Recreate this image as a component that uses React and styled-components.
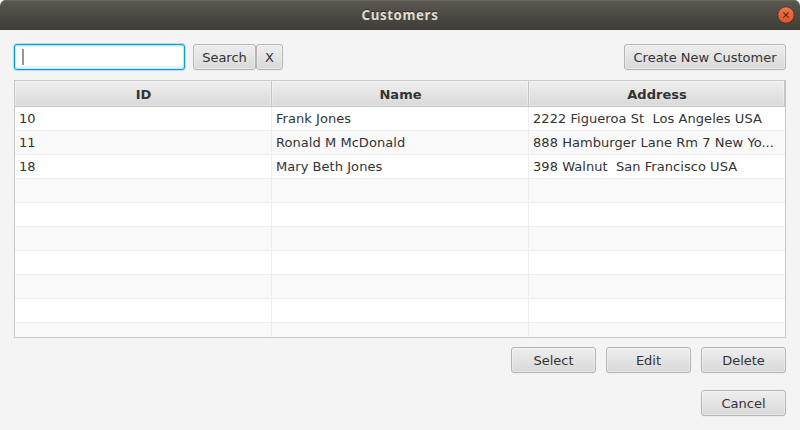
import React from "react";
import styled, { createGlobalStyle } from "styled-components";

const GlobalStyle = createGlobalStyle`
  * { box-sizing: border-box; }
  body { margin: 0; background: #fff; }
`;

const Window = styled.div`
  width: 800px;
  height: 430px;
  background: #f4f4f4;
  border-radius: 6px 6px 0 0;
  overflow: hidden;
  font: 13px/16px "DejaVu Sans", sans-serif;
  color: #333;
`;

const TitleBar = styled.header`
  height: 30px;
  display: grid;
  grid-template-columns: 1fr auto 1fr;
  align-items: center;
  padding: 0 5px;
  background: linear-gradient(#5b5850, #3e3d38);
  box-shadow: inset 0 1px #69665d;
`;

const Title = styled.h1`
  grid-column: 2;
  margin: 0;
  font: 700 13.3px/20px "Noto Sans", sans-serif;
  letter-spacing: 0.6px;
  color: #dfdbd2;
  text-shadow: 0 -1px #2d2c28;
`;

const CloseButton = styled.button`
  justify-self: end;
  width: 18px;
  height: 18px;
  padding: 0;
  border: 0;
  background: none;
  svg { display: block; }
`;

const Content = styled.main`
  padding: 14px 14px 0;
`;

const Toolbar = styled.div`
  display: flex;
  height: 26px;
  margin-bottom: 10px;
`;

const SearchField = styled.div`
  width: 171px;
  height: 26px;
  margin-right: 8px;
  padding: 4px 0 0 8px;
  border: 1px solid #039ed3;
  border-radius: 3px;
  background: #fff;
  box-shadow: 0 0 0 1px #b5dfec, inset 0 0 0 1px #c5e6f1, inset 0 2px #e1eff5, inset 0 -3px #eaf4f8;
`;

const Caret = styled.div`
  width: 2px;
  height: 16px;
  margin-left: -1px;
  background: #969696;
`;

const Button = styled.button`
  width: ${({ $width }) => $width}px;
  height: 26px;
  padding: 1px 0 0;
  border: 1px solid #b5b5b5;
  border-radius: 3px;
  background: linear-gradient(#eeeeee, #d9d9d9);
  box-shadow: inset 0 0 0 1px rgba(255, 255, 255, 0.35), 0 1px #ececec;
  font: inherit;
  color: #333;
  white-space: nowrap;
`;

const Spacer = styled.div`
  flex: 1;
`;

const Table = styled.div`
  height: 258px;
  border: 1px solid #c8c8c8;
  background: #fff;
  overflow: hidden;
`;

const Row = styled.div`
  display: grid;
  grid-template-columns: 257px 257px 256px;
  height: 24px;
  background: ${({ $striped }) => ($striped ? "#f9f9f9" : "#fff")};
`;

const HeaderRow = styled(Row)`
  height: 26px;
`;

const HeaderCell = styled.div`
  padding: 6px 0 0 1px;
  border-right: 1px solid #c4c4c4;
  border-bottom: 1px solid #c4c4c4;
  background: linear-gradient(#efefef, #d9d9d9);
  box-shadow: inset 0 0 0 1px rgba(255, 255, 255, 0.35);
  text-align: center;
  font-weight: 700;
`;

const Cell = styled.div`
  padding: 4px 4px 0;
  border-right: 1px solid #ededed;
  border-bottom: 1px solid #ededed;
  letter-spacing: 0.05px;
  white-space: pre;
  &:last-child { border-right: 0; }
`;

const Actions = styled.footer`
  display: flex;
  justify-content: flex-end;
  gap: 10px;
  margin-top: ${({ $top }) => $top}px;
`;

const columns = ["ID", "Name", "Address"];
const customers = [
  ["10", "Frank Jones", "2222 Figueroa St  Los Angeles USA"],
  ["11", "Ronald M McDonald", "888 Hamburger Lane Rm 7 New Yo..."],
  ["18", "Mary Beth Jones", "398 Walnut  San Francisco USA"],
];
const rows = Array.from({ length: 10 }, (_, i) => customers[i] || ["", "", ""]);

function CloseIcon() {
  return (
    <svg width="18" height="18" viewBox="0 0 18 18">
      <defs>
        <linearGradient id="close" x1="0" y1="0" x2="0" y2="1">
          <stop offset="0" stopColor="#f4764e" />
          <stop offset="1" stopColor="#e4531f" />
        </linearGradient>
      </defs>
      <circle cx="9" cy="9" r="8.2" fill="url(#close)" stroke="#38342e" strokeWidth="0.8" />
      <path d="M6.3 6.3 L11.7 11.7 M11.7 6.3 L6.3 11.7" stroke="#46301f" strokeWidth="1.1" />
    </svg>
  );
}

export default function App() {
  return (
    <>
      <GlobalStyle />
      <Window>
        <TitleBar>
          <Title>Customers</Title>
          <CloseButton aria-label="Close"><CloseIcon /></CloseButton>
        </TitleBar>
        <Content>
          <Toolbar>
            <SearchField role="searchbox"><Caret /></SearchField>
            <Button $width={63}>Search</Button>
            <Button $width={27}>X</Button>
            <Spacer />
            <Button $width={162}>Create New Customer</Button>
          </Toolbar>
          <Table>
            <HeaderRow>
              {columns.map((name) => <HeaderCell key={name}>{name}</HeaderCell>)}
            </HeaderRow>
            {rows.map((cells, i) => (
              <Row key={i} $striped={i % 2 === 1}>
                {cells.map((text, c) => <Cell key={c}>{text}</Cell>)}
              </Row>
            ))}
          </Table>
          <Actions $top={9}>
            <Button $width={85}>Select</Button>
            <Button $width={85}>Edit</Button>
            <Button $width={85}>Delete</Button>
          </Actions>
          <Actions $top={17}>
            <Button $width={85}>Cancel</Button>
          </Actions>
        </Content>
      </Window>
    </>
  );
}
